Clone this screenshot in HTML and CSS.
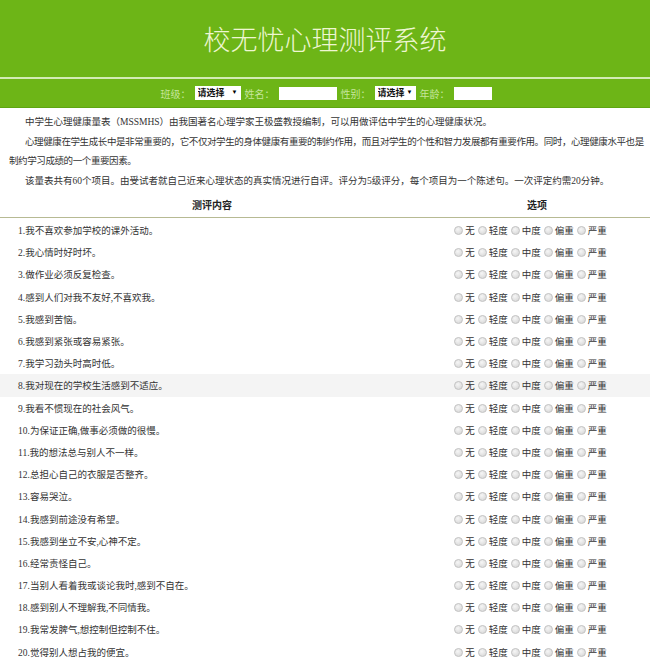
FILE: index.html
```html
<!DOCTYPE html>
<html>
<head>
    <meta charset="utf-8">
    <title>校无忧心理测评系统</title>
    <link rel="stylesheet" href="styles.css">
</head>
<body>

    <div class="header">
        <h1 class="title">校无忧心理测评系统</h1>
    </div>

    <div class="info-bar">
        <span class="label">班级：</span>
        <span class="select-wrap"><select class="pick"><option>请选择</option></select></span>
        <span class="label">姓名：</span>
        <input type="text" class="field name-field">
        <span class="label">性别：</span>
        <span class="select-wrap"><select class="pick short"><option>请选择</option></select></span>
        <span class="label">年龄：</span>
        <input type="text" class="field age-field">
    </div>

    <div class="intro">
        <p>中学生心理健康量表（MSSMHS）由我国著名心理学家王极盛教授编制，可以用做评估中学生的心理健康状况。</p>
        <p class="tight">心理健康在学生成长中是非常重要的，它不仅对学生的身体健康有重要的制约作用，而且对学生的个性和智力发展都有重要作用。同时，心理健康水平也是制约学习成绩的一个重要因素。</p>
        <p>该量表共有60个项目。由受试者就自己近来心理状态的真实情况进行自评。评分为5级评分，每个项目为一个陈述句。一次评定约需20分钟。</p>
    </div>

    <table class="quiz">
        <thead>
            <tr>
                <th class="col-content">测评内容</th>
                <th class="col-options">选项</th>
            </tr>
        </thead>
        <tbody id="quizBody"></tbody>
    </table>

    <script>
        var items = [
            '我不喜欢参加学校的课外活动。',
            '我心情时好时坏。',
            '做作业必须反复检查。',
            '感到人们对我不友好,不喜欢我。',
            '我感到苦恼。',
            '我感到紧张或容易紧张。',
            '我学习劲头时高时低。',
            '我对现在的学校生活感到不适应。',
            '我看不惯现在的社会风气。',
            '为保证正确,做事必须做的很慢。',
            '我的想法总与别人不一样。',
            '总担心自己的衣服是否整齐。',
            '容易哭泣。',
            '我感到前途没有希望。',
            '我感到坐立不安,心神不定。',
            '经常责怪自己。',
            '当别人看着我或谈论我时,感到不自在。',
            '感到别人不理解我,不同情我。',
            '我常发脾气,想控制但控制不住。',
            '觉得别人想占我的便宜。'
        ];
        var levels = ['无', '轻度', '中度', '偏重', '严重'];
        var body = document.getElementById('quizBody');

        items.forEach(function(text, i) {
            var tr = document.createElement('tr');
            if (i === 7) tr.className = 'hover';
            var html = '<td class="item">' + (i + 1) + '.' + text + '</td><td class="options">';
            levels.forEach(function(level, j) {
                html += '<label class="opt"><input type="radio" name="q' + (i + 1) + '" value="' + j + '">' + level + '</label>';
            });
            html += '</td>';
            tr.innerHTML = html;
            body.appendChild(tr);
        });
    </script>
</body>
</html>
```

FILE: styles.css
```css
body {
    margin: 0;
    padding: 0;
    background: #fff;
    color: #333;
    font-family: "Liberation Serif", "Noto Sans CJK SC", serif;
    font-size: 9.5px;
}

.header {
    background: #6db517;
    height: 77px;
    display: flex;
    align-items: center;
    justify-content: center;
    border-bottom: 2px solid #d3ebb4;
}

.title {
    margin: 0;
    color: #eef6d2;
    font-family: "Noto Sans CJK SC", sans-serif;
    font-weight: 300;
    font-size: 27px;
}

.info-bar {
    background: #6db517;
    height: 28px;
    display: flex;
    align-items: center;
    justify-content: center;
    gap: 2px;
    border-bottom: 1px solid #5ea512;
    padding-left: 4px;
}

.label {
    color: #c6e59c;
    font-family: "Noto Sans CJK SC", sans-serif;
    font-size: 10px;
}

.select-wrap {
    position: relative;
    display: inline-block;
    margin: 0 2px;
}

.select-wrap:after {
    content: "▼";
    position: absolute;
    right: 3px;
    top: 3px;
    font-size: 6px;
    color: #000;
    pointer-events: none;
}

.pick {
    appearance: none;
    -webkit-appearance: none;
    border: 0;
    border-radius: 0;
    background: #fff;
    width: 46px;
    height: 14px;
    padding: 0 0 0 3px;
    font-family: "Noto Sans CJK SC", sans-serif;
    font-size: 9px;
    font-weight: bold;
    color: #111;
    line-height: 14px;
}

.pick.short {
    width: 41px;
}

.field {
    border: 0;
    background: #fff;
    height: 13px;
    padding: 0;
    margin: 0 2px;
}

.name-field {
    width: 58px;
}

.age-field {
    width: 38px;
}

.intro {
    padding: 5px 2px 0 9px;
}

.intro p {
    margin: 0;
    text-indent: 16px;
    line-height: 19.5px;
    color: #333;
}

.intro p.tight {
    letter-spacing: -0.4px;
}

.quiz {
    width: 100%;
    border-collapse: collapse;
    margin-top: 3px;
}

.quiz th {
    font-family: "Noto Sans CJK SC", sans-serif;
    font-size: 10px;
    font-weight: bold;
    color: #222;
    line-height: 20px;
    padding: 1px 0 2px;
    border-bottom: 1px solid #b7ba93;
}

.col-content {
    width: 424px;
}

.quiz tbody tr:first-child td {
    padding-top: 1px;
}

.quiz td {
    height: 22.2px;
    padding: 0;
    color: #333;
}

.quiz tr.hover td {
    background: #f4f4f4;
}

.item {
    padding-left: 18px !important;
}

.options {
    text-align: center;
    padding-right: 10px !important;
    white-space: nowrap;
}

.opt {
    margin-right: 3px;
}

.opt input {
    appearance: none;
    -webkit-appearance: none;
    width: 9px;
    height: 9px;
    margin: 0 2px 0 0;
    vertical-align: -1px;
    border-radius: 50%;
    border: 1px solid #c4c4c4;
    background: radial-gradient(circle at 40% 35%, #f6f6f6, #d2d2d2);
}
```
